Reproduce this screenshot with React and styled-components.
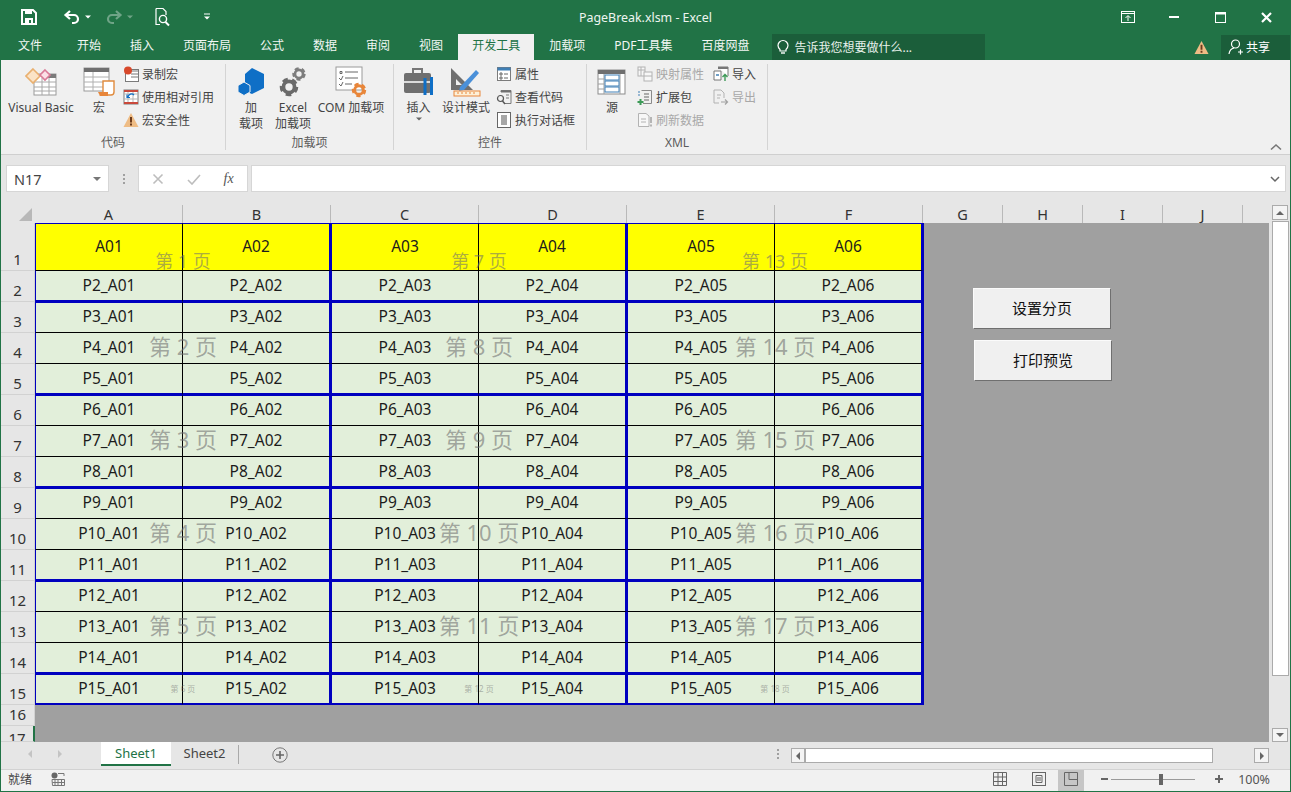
import React from "react";
import styled, { createGlobalStyle } from "styled-components";

const GREEN = "#217346";
const DARK_GREEN = "#1b5e3a";
const BLUE = "#0000bf";
const ICON_BLUE = "#0f6fc6";
const ORANGE = "#e8863a";

const Global = createGlobalStyle`
  html, body { margin: 0; padding: 0; background: #fff; }
  body { font-family: "Noto Sans", "Noto Sans CJK SC", sans-serif; }
`;

const Window = styled.div`
  width: 1291px;
  height: 792px;
  box-sizing: border-box;
  border: 1px solid ${GREEN};
  border-top: 0;
  display: flex;
  flex-direction: column;
  overflow: hidden;
  background: #e6e6e6;
`;

const TitleBar = styled.div`
  height: 34px;
  flex: none;
  background: ${GREEN};
  color: #fff;
  display: grid;
  grid-template-columns: 1fr auto 1fr;
  align-items: center;
`;
const QuickAccess = styled.div`
  display: flex;
  align-items: center;
  padding-left: 19px;
`;
const QuickBtn = styled.span`
  display: flex;
  margin-right: ${({ $mr }) => $mr || 0}px;
  opacity: ${({ $off }) => ($off ? 0.35 : 1)};
`;
const Title = styled.div`
  font-size: 12.4px;
  color: #eef5f0;
`;
const WinControls = styled.div`
  display: flex;
  justify-content: flex-end;
  padding-right: 1px;
`;
const WinBtn = styled.span`
  width: 46px;
  height: 34px;
  display: flex;
  align-items: center;
  justify-content: center;
`;

const TabRow = styled.div`
  height: 26px;
  flex: none;
  background: ${GREEN};
  display: flex;
  gap: 1px;
`;
const Tab = styled.div`
  padding: 0 14px;
  box-sizing: border-box;
  text-align: center;
  font-size: 12px;
  line-height: 24px;
  color: ${({ $active }) => ($active ? GREEN : "#f2f7f4")};
  background: ${({ $active }) => ($active ? "#f0f0f0" : "transparent")};
`;
const FileTab = styled(Tab)`
  padding: 0 20px 0 17px;
`;
const TellMe = styled.div`
  width: 213px;
  margin-left: 8px;
  background: ${DARK_GREEN};
  color: #e8f1ec;
  font-size: 12px;
  display: flex;
  align-items: center;
  gap: 4px;
  padding-left: 4px;
  box-sizing: border-box;
`;
const TabRight = styled.div`
  margin-left: auto;
  display: flex;
  align-items: center;
`;
const Share = styled.div`
  width: 69px;
  height: 25px;
  margin-left: 12px;
  background: ${DARK_GREEN};
  color: #fff;
  font-size: 12px;
  display: flex;
  align-items: center;
  gap: 2px;
  padding-left: 7px;
  box-sizing: border-box;
`;

const Ribbon = styled.div`
  height: 95px;
  flex: none;
  box-sizing: border-box;
  position: relative;
  background: #f0f0f0;
  border-bottom: 1px solid #cfcfcf;
  display: flex;
  padding-top: 4px;
  color: #444;
`;
const Group = styled.div`
  width: ${({ $w }) => $w}px;
  box-sizing: border-box;
  height: 86px;
  padding-left: ${({ $pl }) => $pl}px;
  border-right: 1px solid #d4d4d4;
  display: flex;
  flex-direction: column;
`;
const GroupBody = styled.div`
  display: flex;
  flex: none;
  height: 71px;
`;
const GroupLabel = styled.div`
  flex: none;
  font-size: 12px;
  line-height: 16px;
  text-align: center;
  color: #5c5c5c;
  margin-left: -${({ $pl }) => $pl}px;
`;
const LargeBtn = styled.div`
  width: ${({ $w }) => $w}px;
  flex: none;
  display: flex;
  flex-direction: column;
  align-items: center;
  font-size: 12px;
  line-height: 16px;
  text-align: center;
  color: #444;
`;
const LargeIcon = styled.div`
  height: 36px;
  flex: none;
  display: flex;
  align-items: center;
  justify-content: center;
`;
const SmallCol = styled.div`
  display: flex;
  flex-direction: column;
  margin-top: -2px;
  margin-left: ${({ $ml }) => $ml || 0}px;
`;
const SmallBtn = styled.div`
  height: 23px;
  display: flex;
  align-items: center;
  gap: 3px;
  font-size: 12px;
  white-space: nowrap;
  color: ${({ $off }) => ($off ? "#a8a8a8" : "#444")};
`;
const Collapse = styled.span`
  position: absolute;
  right: 8px;
  bottom: 3px;
  display: flex;
`;

const FormulaBar = styled.div`
  height: 50px;
  flex: none;
  display: flex;
  align-items: flex-start;
  padding: 10px 4px 0 5px;
  box-sizing: border-box;
`;
const FieldBox = styled.div`
  height: 27px;
  box-sizing: border-box;
  background: #fff;
  border: 1px solid #d6d6d6;
  display: flex;
  align-items: center;
`;
const NameBox = styled(FieldBox)`
  width: 103px;
  padding: 0 7px;
  justify-content: space-between;
  font-size: 14.5px;
  color: #444;
`;
const Grip = styled.span`
  width: 29px;
  height: 27px;
  display: flex;
  align-items: center;
  justify-content: center;
`;
const FormulaBtns = styled(FieldBox)`
  width: 110px;
  justify-content: space-around;
  padding: 0 2px;
  margin-right: 3px;
`;
const FxMark = styled.span`
  font-family: "Liberation Serif", serif;
  font-style: italic;
  font-size: 14px;
  color: #555;
`;
const FormulaInput = styled(FieldBox)`
  flex: 1;
  justify-content: flex-end;
  padding-right: 4px;
`;

const SheetRow = styled.div`
  height: 537px;
  flex: none;
  display: flex;
`;
const Sheet = styled.div`
  flex: 1;
  display: grid;
  grid-template-columns: 34px repeat(6, 148px) repeat(4, 80px) 1fr;
  grid-template-rows: 18px 48px repeat(14, 31px) 21px 1fr;
  background: #a0a0a0;
`;
const Corner = styled.div`
  background: #e6e6e6;
  display: flex;
  align-items: flex-end;
  justify-content: flex-end;
  padding: 0 3px 2px 0;
`;
const ColHead = styled.div`
  background: #e6e6e6;
  box-sizing: border-box;
  border-right: ${({ $last }) => ($last ? "0" : "1px solid #b9b9b9")};
  font-size: 14.5px;
  line-height: 18px;
  text-align: center;
  color: #333;
`;
const RowHead = styled.div`
  grid-column: 1;
  grid-row: ${({ $r }) => $r + 1};
  min-height: 0;
  background: #e6e6e6;
  box-sizing: border-box;
  border-bottom: 1px solid #d2d2d2;
  border-right: ${({ $sel }) => ($sel ? `2px solid ${GREEN}` : "1px solid #d2d2d2")};
  font-size: 15px;
  line-height: 20px;
  color: #333;
  display: flex;
  align-items: ${({ $sel }) => ($sel ? "flex-start" : "flex-end")};
  justify-content: center;
  padding-bottom: ${({ $sel }) => ($sel ? 0 : 1)}px;
  padding-top: ${({ $sel }) => ($sel ? 2 : 0)}px;
  overflow: hidden;
`;
const Cell = styled.div`
  grid-column: ${({ $c }) => $c + 2};
  grid-row: ${({ $r }) => $r + 1};
  box-sizing: border-box;
  background: ${({ $head }) => ($head ? "#ffff00" : "#e2efda")};
  border-top: ${({ $top }) => $top}px solid ${BLUE};
  border-left: ${({ $left }) => $left}px solid ${BLUE};
  border-right: ${({ $thick }) => ($thick ? `2px solid ${BLUE}` : "1px solid #000")};
  border-bottom: ${({ $thickB }) => ($thickB ? `2px solid ${BLUE}` : "1px solid #000")};
  box-shadow: ${({ $edge }) => ($edge ? `1px 0 0 ${BLUE}` : "none")};
  font-size: 15.5px;
  color: #1c1c1c;
  padding-bottom: ${({ $top, $head }) => ($head ? 2 : $top ? 3 : 2)}px;
  display: flex;
  align-items: center;
  justify-content: center;
  white-space: nowrap;
`;
const Watermark = styled.div`
  grid-column: ${({ $c }) => $c + 2} / span 2;
  grid-row: ${({ $r }) => $r + 1} / span ${({ $span }) => $span};
  z-index: 1;
  display: flex;
  align-items: center;
  justify-content: center;
  padding-bottom: ${({ $size }) => Math.round($size * 0.35)}px;
  font-size: ${({ $size }) => $size}px;
  color: rgba(110, 110, 110, ${({ $size }) => ($size < 10 ? 0.5 : 0.58)});
  white-space: nowrap;
  pointer-events: none;
`;
const GrayArea = styled.div`
  grid-column: 8 / -1;
  grid-row: 2 / span 15;
  display: flex;
  flex-direction: column;
  gap: 11px;
  padding: 65px 0 0 50px;
`;
const MacroBtn = styled.div`
  width: 138px;
  height: 41px;
  box-sizing: border-box;
  margin-left: ${({ $ml }) => $ml || 0}px;
  background: #f0f0f0;
  border: 1px solid;
  border-color: #fbfbfb #6f6f6f #6f6f6f #fbfbfb;
  font-size: 15px;
  color: #111;
  padding-bottom: 2px;
  display: flex;
  align-items: center;
  justify-content: center;
`;

const VScroll = styled.div`
  width: 21px;
  flex: none;
  box-sizing: border-box;
  padding-left: 3px;
  padding-right: 1px;
  display: flex;
  flex-direction: column;
`;
const ScrollBtn = styled.div`
  width: ${({ $w }) => $w || 16}px;
  height: ${({ $h }) => $h || 15}px;
  flex: none;
  box-sizing: border-box;
  background: #f4f4f4;
  border: 1px solid #ababab;
  display: flex;
  align-items: center;
  justify-content: center;
`;
const VThumb = styled.div`
  height: 455px;
  flex: none;
  margin-top: 1px;
  box-sizing: border-box;
  background: #fff;
  border: 1px solid #ababab;
`;
const VTrack = styled.div`
  flex: 1;
`;

const SheetTabs = styled.div`
  height: 27px;
  flex: none;
  box-sizing: border-box;
  display: flex;
  align-items: flex-start;
  background: #e6e6e6;
  font-size: 13px;
`;
const TabNav = styled.div`
  width: 100px;
  height: 24px;
  box-sizing: border-box;
  padding-left: 26px;
  display: flex;
  align-items: center;
  gap: 24px;
`;
const SheetTab = styled.div`
  height: 24px;
  box-sizing: border-box;
  width: ${({ $w }) => $w}px;
  text-align: center;
  line-height: 22px;
  color: ${({ $active }) => ($active ? GREEN : "#444")};
  background: ${({ $active }) => ($active ? "#fff" : "transparent")};
  border-bottom: ${({ $active }) => ($active ? `2px solid ${GREEN}` : "0")};
`;
const TabDivider = styled.span`
  width: 1px;
  height: 19px;
  margin: 3px 0 0 0;
  background: #a9a9a9;
`;
const AddSheet = styled.span`
  display: flex;
  margin: 5px 0 0 33px;
`;
const TabsRight = styled.div`
  margin-left: auto;
  display: flex;
  align-items: flex-start;
  padding: 6px 21px 0 0;
`;
const HScrollTrack = styled.div`
  display: flex;
  margin-left: 12px;
  width: 478px;
  height: 15px;
`;
const HThumb = styled.div`
  width: 408px;
  flex: none;
  box-sizing: border-box;
  background: #fff;
  border: 1px solid #ababab;
`;

const StatusBar = styled.div`
  flex: 1;
  background: #f1f1f1;
  border-top: 1px solid #d2d2d2;
  display: flex;
  align-items: center;
  font-size: 12px;
  color: #444;
  padding-left: 7px;
`;
const StatusText = styled.span`
  margin-bottom: 3px;
`;
const MacroStatus = styled.span`
  display: flex;
  margin: 0 0 3px 19px;
`;
const StatusRight = styled.div`
  margin-left: auto;
  height: 100%;
  display: flex;
  align-items: center;
  padding-right: 20px;
`;
const ViewBtn = styled.span`
  width: ${({ $w }) => $w || 39}px;
  height: 100%;
  box-sizing: border-box;
  padding-bottom: 3px;
  display: flex;
  align-items: center;
  justify-content: center;
  background: ${({ $active }) => ($active ? "#c6c6c6" : "transparent")};
`;
const ZoomControls = styled.div`
  display: flex;
  align-items: center;
  margin-bottom: 3px;
`;
const ZoomMinus = styled.span`
  display: flex;
  margin: 0 2px 0 17px;
`;
const ZoomSlider = styled.div`
  width: 84px;
  height: 1px;
  margin: 0 20px 0 0;
  background: #9a9a9a;
  position: relative;
`;
const ZoomKnob = styled.span`
  position: absolute;
  left: 48px;
  top: -5px;
  width: 4px;
  height: 11px;
  background: #666;
`;
const ZoomLabel = styled.span`
  margin-left: 15px;
  font-size: 12.5px;
  color: #555;
`;

const Svg = ({ w = 16, h = 16, children }) => (
  <svg width={w} height={h} viewBox={`0 0 ${w} ${h}`} fill="none">
    {children}
  </svg>
);

const Gear = ({ x, y, r, color }) => (
  <g>
    <circle cx={x} cy={y} r={r * 0.62} stroke={color} strokeWidth={r * 0.42} />
    <circle cx={x} cy={y} r={r * 0.88} stroke={color} strokeWidth={r * 0.3} strokeDasharray={`${r * 0.62} ${r * 0.5}`} />
  </g>
);

const Caret = ({ color = "#fff", down = true, s = 6 }) => (
  <svg width={s} height={s} viewBox="0 0 6 6">
    <path d={down ? "M0 1.5H6L3 4.5Z" : "M0 4.5H6L3 1.5Z"} fill={color} />
  </svg>
);

const SideCaret = ({ left, color = "#666" }) => (
  <svg width="6" height="8" viewBox="0 0 6 8">
    <path d={left ? "M5 0V8L1 4Z" : "M1 0V8L5 4Z"} fill={color} />
  </svg>
);

const SaveIcon = () => (
  <Svg w={18} h={18}>
    <path d="M2 2H13L16 5V16H2Z" stroke="#fff" strokeWidth="2" />
    <rect x="5" y="1" width="7" height="5" fill="#fff" />
    <rect x="5" y="10" width="8" height="6" fill="#fff" />
    <rect x="9" y="12" width="2" height="3" fill={GREEN} />
  </Svg>
);
const UndoIcon = ({ flip }) => (
  <svg width="18" height="18" viewBox="0 0 18 18" fill="none" style={flip ? { transform: "scaleX(-1)" } : undefined}>
    <path d="M7 3L2.5 7L7 11M3 7H11A4 4 0 0 1 11 15H9" stroke="#fff" strokeWidth="2.2" />
  </svg>
);
const PreviewIcon = () => (
  <Svg w={18} h={20}>
    <path d="M3 1.5H10L13 4.5V8M7 17.5H3V1.5" stroke="#fff" strokeWidth="1.2" />
    <circle cx="10" cy="12" r="3.6" stroke="#fff" strokeWidth="1.4" />
    <path d="M12.5 15L16 18.5" stroke="#fff" strokeWidth="2" />
  </Svg>
);
const CustomizeIcon = () => (
  <Svg w={8} h={8}>
    <path d="M1 1H7" stroke="#fff" />
    <path d="M1 3.5H7L4 6.5Z" fill="#fff" />
  </Svg>
);

const VbIcon = () => (
  <Svg w={32} h={30}>
    <rect x="9" y="7" width="22" height="21" fill="#fff" stroke="#9a9a9a" />
    <rect x="19" y="7" width="12" height="4" fill="#7b7b7b" />
    <path d="M9 15H31M9 20H31M9 24H31M17 11V28M24 11V28" stroke="#a8a8a8" />
    <path d="M8 2L15 9L8 16L1 9Z" fill="#fbe3c6" stroke="#e9b070" strokeWidth="1.6" />
    <path d="M20 3L25 8L20 13L15 8Z" fill="#fbdfe6" stroke="#d97a97" strokeWidth="1.6" />
  </Svg>
);
const MacroIcon = () => (
  <Svg w={32} h={30}>
    <rect x="1" y="1" width="25" height="23" fill="#fff" stroke="#9a9a9a" />
    <rect x="1" y="1" width="25" height="4" fill="#6f6f6f" />
    <path d="M1 10H26M1 15H26M1 20H26M10 5V24" stroke="#b0b0b0" />
    <path d="M20 14H31V25C31 28 29 28 28 28H18C19 27 20 26 20 25Z" fill="#fff" stroke="#e08b3e" strokeWidth="1.4" />
    <path d="M15 25H25V29H17Z" fill={ORANGE} />
  </Svg>
);
const AddinIcon = () => (
  <Svg w={28} h={30}>
    <path d="M15 1L27 7V21L15 27L8 24V7Z" fill={ICON_BLUE} />
    <path d="M7 15L13 18.5V25L7 28.5L1 25V18.5Z" fill={ICON_BLUE} stroke="#f0f0f0" />
  </Svg>
);
const GearsIcon = () => (
  <Svg w={28} h={32}>
    <Gear x={20} y={8} r={6.5} color="#7d7d7d" />
    <Gear x={10} y={21} r={9} color="#6a6a6a" />
  </Svg>
);
const ComIcon = () => (
  <Svg w={32} h={32}>
    <rect x="1" y="1" width="26" height="23" fill="#fff" stroke="#9a9a9a" />
    <path d="M5 5.5H7V7.5H5ZM10 6H23M4 12L6 14L8 10M10 12H23M4 18L6 20L8 16M10 18H17" stroke="#666" />
    <Gear x={24} y={24} r={7} color={ORANGE} />
  </Svg>
);
const InsertIcon = () => (
  <Svg w={32} h={30}>
    <path d="M10 6V2H19V6" stroke="#777" strokeWidth="2" />
    <rect x="1" y="6" width="27" height="20" rx="2" fill="#6f6f6f" />
    <path d="M1 15H28" stroke="#fff" strokeWidth="1.5" />
    <path d="M22 11V28M28.5 10V28" stroke={ICON_BLUE} strokeWidth="3" />
  </Svg>
);
const DesignIcon = () => (
  <Svg w={32} h={32}>
    <path d="M1 2V24H23ZM6 13V19H12Z" fill="#6f6f6f" fillRule="evenodd" />
    <path d="M10 21L26 4L29 7L14 24L9 25Z" fill="#4a90d9" />
    <rect x="4" y="25" width="26" height="5" fill="#fdf0d8" stroke={ORANGE} />
    <path d="M8 26V28M12 26V28M16 26V28M20 26V28M24 26V28" stroke={ORANGE} />
  </Svg>
);
const SourceIcon = () => (
  <Svg w={30} h={26}>
    <rect x="1" y="1" width="27" height="24" fill="#fff" stroke="#8b8b8b" />
    <rect x="1" y="1" width="27" height="4" fill="#6f6f6f" />
    <path d="M7 5V25M1 10H7M1 15H7M1 20H7M23 5V25" stroke="#a0a0a0" />
    <rect x="8" y="6" width="14" height="5" fill="#fff" stroke="#3f7fb5" />
    <rect x="8" y="12" width="14" height="5" fill="#fff" stroke="#3f7fb5" />
    <rect x="8" y="18" width="14" height="5" fill="#fff" stroke="#3f7fb5" />
  </Svg>
);

const RecordIcon = () => (
  <Svg>
    <rect x="2.5" y="3.5" width="13" height="12" fill="#fff" stroke="#7b7b7b" />
    <path d="M2.5 3.5H15.5V5H2.5ZM8 8H15M8 11H15" stroke="#777" />
    <circle cx="5" cy="4.5" r="4" fill="#d8492b" />
  </Svg>
);
const RelativeIcon = () => (
  <Svg>
    <rect x="1" y="1" width="14" height="14" fill="#fff" stroke="#7b7b7b" />
    <path d="M1 5H15M1 10H15M5 1V15M10 1V15" stroke="#b5b5b5" />
    <path d="M1 1H15V3H1ZM1 13H15V15H1Z" fill="#c9493b" />
    <path d="M11 6A3.5 3.5 0 0 0 5 8M4 5.5V8.5H7" stroke={ICON_BLUE} strokeWidth="1.2" />
  </Svg>
);
const WarnIcon = ({ s = 16 }) => (
  <svg width={s} height={s} viewBox="0 0 16 16">
    <path d="M8 1L15.5 15H0.5Z" fill="#eebc85" />
    <path d="M7 5H9V10.5H7ZM7 11.5H9V13.5H7Z" fill="#6b3a1c" />
  </svg>
);
const PropIcon = () => (
  <Svg>
    <rect x="1.5" y="1.5" width="13" height="13" fill="#fff" stroke="#7b7b7b" />
    <rect x="1.5" y="1.5" width="13" height="3" fill="#3f7fb5" />
    <path d="M4 7H6V9H4ZM8 8H12M4 11H6V13H4ZM8 12H12" stroke="#666" />
  </Svg>
);
const CodeIcon = () => (
  <Svg>
    <path d="M5 3V1.5H15V14.5H8" stroke="#7b7b7b" />
    <rect x="5" y="1.5" width="10" height="2" fill="#6f6f6f" />
    <path d="M10 6H13M10 9H13" stroke="#777" />
    <circle cx="4.5" cy="9.5" r="3" stroke="#555" strokeWidth="1.2" />
    <path d="M6.5 12L9 15" stroke="#555" strokeWidth="1.4" />
  </Svg>
);
const DialogIcon = () => (
  <Svg>
    <rect x="1.5" y="0.5" width="13" height="15" fill="#fff" stroke="#666" />
    <rect x="5" y="3" width="6" height="10" fill="#a7a7a7" />
  </Svg>
);
const MapIcon = () => (
  <Svg>
    <g opacity="0.5" stroke="#777">
      <rect x="1" y="1" width="7" height="9" fill="#fff" />
      <rect x="7" y="6" width="8" height="9" fill="#fff" />
      <path d="M1 4H8M4 1V10M7 10H15" />
    </g>
  </Svg>
);
const PackIcon = () => (
  <Svg>
    <path d="M4.5 1.5H14.5V14.5H6" stroke="#8a8a8a" />
    <path d="M7 5H12M7 8H12M7 11H12" stroke="#666" />
    <path d="M1 3H3M1 6H3" stroke="#3f7fb5" />
    <path d="M3.5 10V16M0.5 13H6.5" stroke="#3d9a57" strokeWidth="2" />
  </Svg>
);
const RefreshIcon = () => (
  <Svg>
    <g opacity="0.5">
      <path d="M1.5 1.5H9L12 4V14.5H1.5Z" fill="#fff" stroke="#777" />
      <path d="M4 7H9M4 10H9" stroke="#777" />
      <path d="M14 5V11M14 12.5V14.5" stroke="#555" strokeWidth="1.5" />
    </g>
  </Svg>
);
const ImportIcon = () => (
  <Svg w={17} h={16}>
    <path d="M6 1H16V10M2 5H9V14H2Z" fill="#fff" stroke="#777" />
    <rect x="6" y="1" width="10" height="2" fill="#777" />
    <path d="M4 9H7" stroke="#3f7fb5" strokeWidth="1.5" />
    <path d="M13 15V9M10.5 11L13 8.5L15.5 11" stroke="#3d9a57" strokeWidth="1.4" />
  </Svg>
);
const ExportIcon = () => (
  <Svg w={17} h={16}>
    <g opacity="0.5">
      <path d="M2 1H9L12 4V9M7 14H2V1" stroke="#777" />
      <path d="M5 6H9M5 9H8" stroke="#777" />
      <path d="M9 13H15M13 10.5L15.5 13L13 15.5" stroke="#555" strokeWidth="1.2" />
    </g>
  </Svg>
);

const codeActions = [
  [<RecordIcon key="i" />, "录制宏"],
  [<RelativeIcon key="i" />, "使用相对引用"],
  [<WarnIcon key="i" />, "宏安全性"],
];
const controlActions = [
  [<PropIcon key="i" />, "属性"],
  [<CodeIcon key="i" />, "查看代码"],
  [<DialogIcon key="i" />, "执行对话框"],
];
const xmlActions = [
  [<MapIcon key="i" />, "映射属性", true],
  [<PackIcon key="i" />, "扩展包", false],
  [<RefreshIcon key="i" />, "刷新数据", true],
];
const xmlMoves = [
  [<ImportIcon key="i" />, "导入", false],
  [<ExportIcon key="i" />, "导出", true],
];

const Actions = ({ items, ml }) => (
  <SmallCol $ml={ml}>
    {items.map(([icon, label, off]) => (
      <SmallBtn key={label} $off={off}>
        {icon}
        {label}
      </SmallBtn>
    ))}
  </SmallCol>
);

const tabs = ["开始", "插入", "页面布局", "公式", "数据", "审阅", "视图", "开发工具", "加载项", "PDF工具集", "百度网盘"];
const cols = ["A", "B", "C", "D", "E", "F", "G", "H", "I", "J"];
const pageEnds = [2, 5, 8, 11, 14, 15];
const pages = [
  { r: 1, span: 2, size: 18 },
  { r: 3, span: 3, size: 22 },
  { r: 6, span: 3, size: 22 },
  { r: 9, span: 3, size: 22 },
  { r: 12, span: 3, size: 22 },
  { r: 15, span: 1, size: 8 },
];
const rowNums = Array.from({ length: 17 }, (_, i) => i + 1);
const dataCols = [0, 1, 2, 3, 4, 5];

const SheetGrid = () => (
  <Sheet>
    <Corner>
      <svg width="13" height="13" viewBox="0 0 13 13">
        <path d="M13 0V13H0Z" fill="#b8b8b8" />
      </svg>
    </Corner>
    {cols.map((c) => (
      <ColHead key={c}>{c}</ColHead>
    ))}
    <ColHead $last />
    {rowNums.map((r) => (
      <RowHead key={r} $r={r} $sel={r === 17}>
        {r}
      </RowHead>
    ))}
    {rowNums.slice(0, 15).flatMap((r) =>
      dataCols.map((c) => {
        const prevEnd = pageEnds.includes(r - 1);
        return (
          <Cell
            key={`${r}-${c}`}
            $r={r}
            $c={c}
            $head={r === 1}
            $top={r === 1 || prevEnd ? 1 : 0}
            $left={c === 0 || c === 2 || c === 4 ? 1 : 0}
            $thick={c === 1 || c === 3 || c === 5}
            $edge={c === 5}
            $thickB={pageEnds.includes(r)}
          >
            {r === 1 ? `A0${c + 1}` : `P${r}_A0${c + 1}`}
          </Cell>
        );
      })
    )}
    {[0, 2, 4].flatMap((c, ci) =>
      pages.map((p, pi) => (
        <Watermark key={`${c}-${p.r}`} $c={c} $r={p.r} $span={p.span} $size={p.size}>
          第 {ci * 6 + pi + 1} 页
        </Watermark>
      ))
    )}
    <GrayArea>
      <MacroBtn>设置分页</MacroBtn>
      <MacroBtn $ml={1}>打印预览</MacroBtn>
    </GrayArea>
  </Sheet>
);

export default function App() {
  return (
    <Window>
      <Global />
      <TitleBar>
        <QuickAccess>
          <QuickBtn $mr={25}>
            <SaveIcon />
          </QuickBtn>
          <QuickBtn $mr={4}>
            <UndoIcon />
          </QuickBtn>
          <QuickBtn $mr={14}>
            <Caret />
          </QuickBtn>
          <QuickBtn $mr={4} $off>
            <UndoIcon flip />
          </QuickBtn>
          <QuickBtn $mr={20} $off>
            <Caret />
          </QuickBtn>
          <QuickBtn $mr={32}>
            <PreviewIcon />
          </QuickBtn>
          <QuickBtn>
            <CustomizeIcon />
          </QuickBtn>
        </QuickAccess>
        <Title>PageBreak.xlsm - Excel</Title>
        <WinControls>
          <WinBtn>
            <Svg w={14} h={12}>
              <rect x="0.5" y="0.5" width="13" height="11" stroke="#fff" />
              <path d="M0.5 2.5H13.5" stroke="#fff" />
              <path d="M7 10V5M4.5 7L7 4.5L9.5 7" stroke="#fff" />
            </Svg>
          </WinBtn>
          <WinBtn>
            <Svg w={10} h={4}>
              <rect y="1" width="10" height="2" fill="#fff" />
            </Svg>
          </WinBtn>
          <WinBtn>
            <Svg w={11} h={11}>
              <rect x="0.5" y="0.5" width="10" height="10" stroke="#fff" />
              <rect width="11" height="2.5" fill="#fff" />
            </Svg>
          </WinBtn>
          <WinBtn>
            <Svg w={11} h={11}>
              <path d="M1 1L10 10M10 1L1 10" stroke="#fff" strokeWidth="2.2" />
            </Svg>
          </WinBtn>
        </WinControls>
      </TitleBar>

      <TabRow>
        <FileTab>文件</FileTab>
        {tabs.map((t) => (
          <Tab key={t} $active={t === "开发工具"}>
            {t}
          </Tab>
        ))}
        <TellMe>
          <Svg w={14} h={16}>
            <path d="M4 10.5C2.5 9 2 8 2 6.5A5 5 0 0 1 12 6.5C12 8 11.5 9 10 10.5V12H4Z" stroke="#fff" strokeWidth="1.2" />
            <path d="M5 14H9" stroke="#fff" strokeWidth="1.4" />
          </Svg>
          告诉我您想要做什么...
        </TellMe>
        <TabRight>
          <WarnIcon s={15} />
          <Share>
            <Svg w={16} h={16}>
              <circle cx="7.5" cy="5" r="4" stroke="#fff" strokeWidth="1.2" />
              <path d="M1 15C1.5 11.5 3.5 9.5 6 9M10 13H15M12.5 10.5V15.5" stroke="#fff" strokeWidth="1.2" />
            </Svg>
            共享
          </Share>
        </TabRight>
      </TabRow>

      <Ribbon>
        <Group $w={225} $pl={3}>
          <GroupBody>
            <LargeBtn $w={74}>
              <LargeIcon>
                <VbIcon />
              </LargeIcon>
              Visual Basic
            </LargeBtn>
            <LargeBtn $w={42}>
              <LargeIcon>
                <MacroIcon />
              </LargeIcon>
              宏
            </LargeBtn>
            <Actions items={codeActions} ml={3} />
          </GroupBody>
          <GroupLabel $pl={3}>代码</GroupLabel>
        </Group>
        <Group $w={168} $pl={2}>
          <GroupBody>
            <LargeBtn $w={46}>
              <LargeIcon>
                <AddinIcon />
              </LargeIcon>
              加<br />
              载项
            </LargeBtn>
            <LargeBtn $w={38}>
              <LargeIcon>
                <GearsIcon />
              </LargeIcon>
              Excel
              <br />
              加载项
            </LargeBtn>
            <LargeBtn $w={78}>
              <LargeIcon>
                <ComIcon />
              </LargeIcon>
              COM 加载项
            </LargeBtn>
          </GroupBody>
          <GroupLabel $pl={2}>加载项</GroupLabel>
        </Group>
        <Group $w={193} $pl={3}>
          <GroupBody>
            <LargeBtn $w={43}>
              <LargeIcon>
                <InsertIcon />
              </LargeIcon>
              插入
              <Caret color="#666" />
            </LargeBtn>
            <LargeBtn $w={52}>
              <LargeIcon>
                <DesignIcon />
              </LargeIcon>
              设计模式
            </LargeBtn>
            <Actions items={controlActions} ml={4} />
          </GroupBody>
          <GroupLabel $pl={3}>控件</GroupLabel>
        </Group>
        <Group $w={181} $pl={3}>
          <GroupBody>
            <LargeBtn $w={44}>
              <LargeIcon>
                <SourceIcon />
              </LargeIcon>
              源
            </LargeBtn>
            <Actions items={xmlActions} ml={3} />
            <Actions items={xmlMoves} ml={8} />
          </GroupBody>
          <GroupLabel $pl={3}>XML</GroupLabel>
        </Group>
        <Collapse>
          <svg width="12" height="8" viewBox="0 0 12 8" fill="none">
            <path d="M1 6.5L6 2L11 6.5" stroke="#777" strokeWidth="1.6" />
          </svg>
        </Collapse>
      </Ribbon>

      <FormulaBar>
        <NameBox>
          N17
          <Caret color="#777" s={8} />
        </NameBox>
        <Grip>
          <Svg w={2} h={12}>
            <path d="M1 1V3M1 5V7M1 9V11" stroke="#a0a0a0" strokeWidth="2" />
          </Svg>
        </Grip>
        <FormulaBtns>
          <Svg w={12} h={12}>
            <path d="M1.5 1.5L10.5 10.5M10.5 1.5L1.5 10.5" stroke="#bdbdbd" strokeWidth="1.6" />
          </Svg>
          <Svg w={14} h={12}>
            <path d="M1 7L5 11L13 2" stroke="#bdbdbd" strokeWidth="1.6" />
          </Svg>
          <FxMark>fx</FxMark>
        </FormulaBtns>
        <FormulaInput>
          <Svg w={12} h={8}>
            <path d="M2 2L6 6L10 2" stroke="#666" strokeWidth="1.5" />
          </Svg>
        </FormulaInput>
      </FormulaBar>

      <SheetRow>
        <SheetGrid />
        <VScroll>
          <ScrollBtn>
            <Caret color="#666" down={false} s={8} />
          </ScrollBtn>
          <VThumb />
          <VTrack />
          <ScrollBtn $h={14}>
            <Caret color="#666" s={8} />
          </ScrollBtn>
        </VScroll>
      </SheetRow>

      <SheetTabs>
        <TabNav>
          <SideCaret left color="#c4c4c4" />
          <SideCaret color="#c4c4c4" />
        </TabNav>
        <SheetTab $w={70} $active>
          Sheet1
        </SheetTab>
        <SheetTab $w={67}>Sheet2</SheetTab>
        <TabDivider />
        <AddSheet>
          <Svg w={16} h={16}>
            <circle cx="8" cy="8" r="7.2" stroke="#777" />
            <path d="M4 8H12M8 4V12" stroke="#666" strokeWidth="1.6" />
          </Svg>
        </AddSheet>
        <TabsRight>
          <Svg w={2} h={12}>
            <path d="M1 1V3M1 5V7M1 9V11" stroke="#a0a0a0" strokeWidth="2" />
          </Svg>
          <HScrollTrack>
            <ScrollBtn $w={14}>
              <SideCaret left />
            </ScrollBtn>
            <HThumb />
            <VTrack />
            <ScrollBtn $w={15}>
              <SideCaret />
            </ScrollBtn>
          </HScrollTrack>
        </TabsRight>
      </SheetTabs>

      <StatusBar>
        <StatusText>就绪</StatusText>
        <MacroStatus>
          <Svg w={14} h={14}>
            <circle cx="3.5" cy="3.5" r="3" fill="#666" />
            <path d="M7 1.5H13V4M1 7.5H13.5V13.5H1.5ZM4 7.5V13.5M7 7.5V13.5M10.5 7.5V13.5M1.5 10.5H13.5" stroke="#777" />
          </Svg>
        </MacroStatus>
        <StatusRight>
          <ViewBtn>
            <Svg w={14} h={14}>
              <path d="M0.5 0.5H13.5V13.5H0.5ZM5 0.5V13.5M9.5 0.5V13.5M0.5 5H13.5M0.5 9.5H13.5" stroke="#666" />
            </Svg>
          </ViewBtn>
          <ViewBtn>
            <Svg w={14} h={14}>
              <rect x="0.5" y="0.5" width="13" height="13" stroke="#666" />
              <path d="M4 3.5H10V10.5H4ZM5 6H9M5 8H9" stroke="#666" />
            </Svg>
          </ViewBtn>
          <ViewBtn $active $w={26}>
            <Svg w={14} h={14}>
              <path d="M0.5 0.5H13.5V13.5H0.5ZM5 0.5V7.5H13.5" stroke="#666" />
            </Svg>
          </ViewBtn>
          <ZoomControls>
            <ZoomMinus>
              <Svg w={8} h={8}>
                <rect y="3" width="7" height="2" fill="#666" />
              </Svg>
            </ZoomMinus>
            <ZoomSlider>
              <ZoomKnob />
            </ZoomSlider>
            <Svg w={8} h={8}>
              <path d="M0 4H8M4 0V8" stroke="#666" strokeWidth="2" />
            </Svg>
            <ZoomLabel>100%</ZoomLabel>
          </ZoomControls>
        </StatusRight>
      </StatusBar>
    </Window>
  );
}
